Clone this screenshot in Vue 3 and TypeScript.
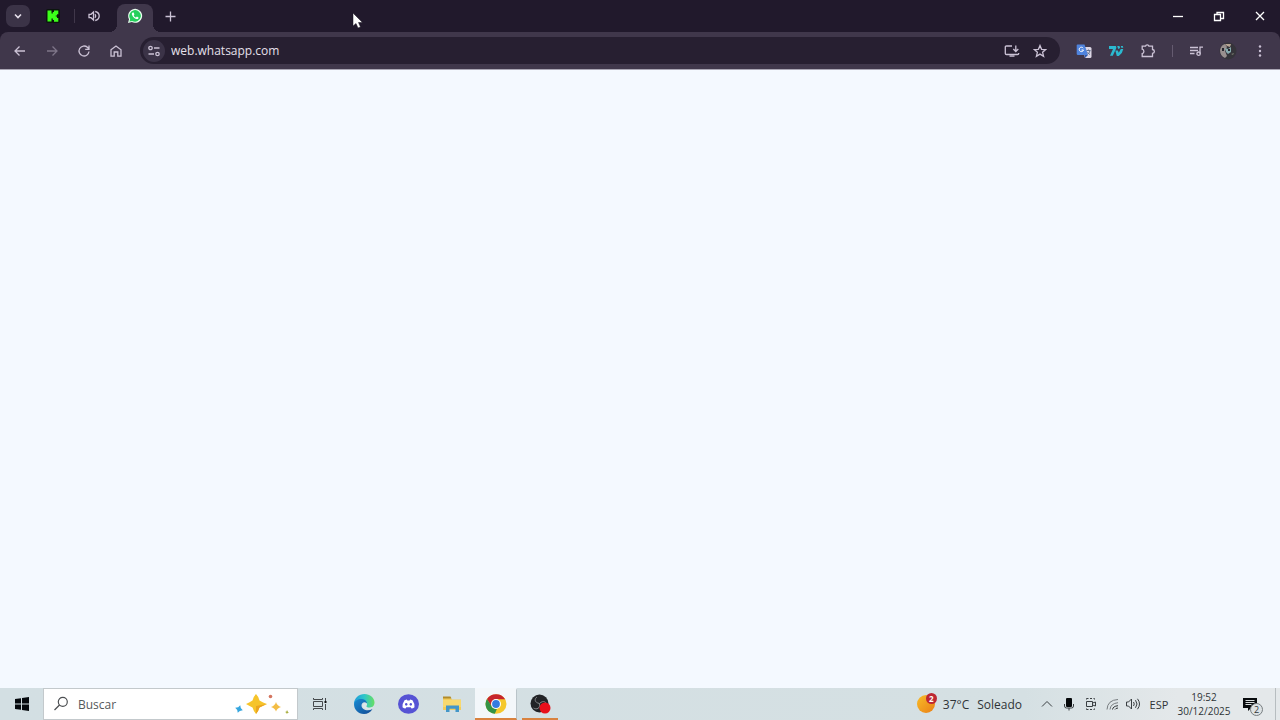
<script setup lang="ts">
import { ref } from 'vue'

const address = ref('web.whatsapp.com')
const query = ref('')
const weather = { temperature: '37°C', summary: 'Soleado', alerts: 2 }
const clock = { time: '19:52', date: '30/12/2025' }
const notifications = 2
</script>

<template>
  <div class="desktop">
    <header class="browser">
      <div class="tabstrip">
        <button class="tab-search" aria-label="Buscar pestañas">
          <svg width="10" height="10" viewBox="0 0 10 10"><path d="M2 3.500 5 6.500 8 3.500" class="line bold" /></svg>
        </button>
        <button class="tab kick" aria-label="Kick">
          <svg width="14" height="14" viewBox="0 0 14 14">
            <rect width="14" height="14" rx="2" fill="#0b160d" />
            <path d="M1.500 1.500h4v3h1.300V3H8V1.500h4.300v3.700H11v1.200H9.800v1.200H11v1.300h1.300v3.800H8V11H6.800V9.500H5.500v3h-4z" fill="#3cff1a" />
          </svg>
        </button>
        <span class="tab-divider"></span>
        <button class="tab audio" aria-label="Pestaña con audio">
          <svg width="12" height="12" viewBox="0 0 12 12">
            <path d="M1 4.300h2L5.500 2v8L3 7.700H1z" class="line" />
            <path d="M7 4.200q1.500 1.800 0 3.600M7.200 1.500q4 1 4 4.500t-4 4.500" class="line" />
          </svg>
        </button>
        <button class="tab active" aria-label="WhatsApp">
          <svg width="16" height="16" viewBox="0 0 16 16">
            <path d="M1 15 2 11.200A7 7 0 1 1 4.800 14z" fill="#e9fff0" />
            <path d="M2.500 13.500 3.200 11A5.800 5.800 0 1 1 5.200 12.900z" fill="#25d05b" />
            <path d="M5.700 4.500c-.9.600-1.100 1.500-.6 2.600.9 2 2.300 3.400 4.300 4 1.300.3 2.200-.5 2.100-1.600L9.900 8.600l-.9 1C7.900 9.200 7.200 8.400 6.700 7.400l.7-.9-.7-1.900z" fill="#fff" />
          </svg>
        </button>
        <button class="new-tab" aria-label="Nueva pestaña">
          <svg width="12" height="12" viewBox="0 0 12 12"><path d="M6.500 1.500v10M1.500 6.500h10" class="line" /></svg>
        </button>
        <div class="window-controls">
          <button aria-label="Minimizar"><svg width="12" height="12" viewBox="0 0 12 12"><path d="M1 6.500h10" class="line white" /></svg></button>
          <button aria-label="Restaurar">
            <svg width="12" height="12" viewBox="0 0 12 12"><path d="M1.500 4.500h6v6h-6zM4 4V2.500h6.500v6H8" class="line white" /></svg>
          </button>
          <button aria-label="Cerrar"><svg width="12" height="12" viewBox="0 0 12 12"><path d="m2 2 8 8M10 2 2 10" class="line white" /></svg></button>
        </div>
      </div>

      <div class="toolbar">
        <nav class="tools">
          <button aria-label="Atrás"><svg width="14" height="14" viewBox="0 0 14 14"><path d="M12 7H2.500M6.500 2.500 2 7l4.500 4.500" class="line" /></svg></button>
          <button class="dim" aria-label="Adelante"><svg width="14" height="14" viewBox="0 0 14 14"><path d="M2 7h9.500M7.500 2.500 12 7l-4.500 4.500" class="line" /></svg></button>
          <button aria-label="Recargar">
            <svg width="14" height="14" viewBox="0 0 14 14"><path d="M12 7.500a5 5 0 1 1-1.600-4.200L12 5M12 1.500V5.300H8.200" class="line" /></svg>
          </button>
          <button aria-label="Inicio"><svg width="14" height="14" viewBox="0 0 14 14"><path d="M2 5.800 7 2l5 3.800V12.200H8.800V8H5.200v4.200H2z" class="line" /></svg></button>
        </nav>
        <form class="omnibox" @submit.prevent>
          <button type="button" class="site-info" aria-label="Información del sitio">
            <svg width="14" height="14" viewBox="0 0 14 14"><circle cx="3.500" cy="4" r="1.700" class="line" /><circle cx="10.500" cy="10" r="1.700" class="line" /><path d="M7 4h5.500M1.500 10H7" class="line" /></svg>
          </button>
          <input v-model="address" class="address" type="text" aria-label="Dirección" spellcheck="false" />
          <button type="button" aria-label="Instalar aplicación">
            <svg width="16" height="14" viewBox="0 0 16 14"><path d="M8 2H2.500Q1.300 2 1.300 3.200v6.300q0 1 1.200 1h11q1.200 0 1.200-1V9M5.500 12.200h5M11.800 1.500v5.700M9.300 5l2.500 2.500L14.300 5" class="line" /></svg>
          </button>
          <button type="button" aria-label="Añadir a marcadores">
            <svg width="14" height="14" viewBox="0 0 14 14"><path d="m7 1.500 1.600 3.800 4.100.3-3.100 2.700 1 4L7 10.100l-3.600 2.200 1-4L1.300 5.600l4.100-.3z" class="line" /></svg>
          </button>
        </form>
        <div class="tools">
          <button aria-label="Traductor">
            <svg width="16" height="16" viewBox="0 0 16 16">
              <path d="M6 4h8q1.500 0 1.500 1.500v8Q15.500 15 14 15H9z" fill="#dcd6e5" />
              <path d="M1.500 1.500h7l3.500 10.500H2Q.7 12 .7 10.700V2.500q0-1 .8-1z" fill="#4f83dd" />
              <path d="M8.500 12H12l-3 3z" fill="#2f56a8" />
              <path d="M7.200 5.200A2.200 2.200 0 1 0 7.500 7H5.500" stroke="#fff" fill="none" />
              <path d="M10.500 7.500h4M12.500 6.500v1M14 7.800q-.5 2-2.500 3.500m0-2q1 1.500 2.500 2.200" stroke="#65748e" fill="none" />
            </svg>
          </button>
          <button aria-label="7TV">
            <svg width="16" height="12" viewBox="0 0 16 12">
              <path d="M1 1h6.800q1 1 .3 2.500L4.800 10.800H2L5 4H1z" fill="#2bb9d0" />
              <path d="M7.300 5.500h2.500l1 2.200 2-3.700h2.500l-1.500 4-3 3H8.800zM9.200 1h2.200l.8 2-2 1zM12.800 1h2l.5 1.800h-2z" fill="#2bb9d0" />
            </svg>
          </button>
          <button aria-label="Extensiones">
            <svg width="16" height="14" viewBox="0 0 16 14"><path d="M2.200 2.200h3.300q.2-1.400 1.700-1.400t1.700 1.400h3.600v3.300q1.900.3 1.900 1.900t-1.900 1.900v3.200H2.200V9.600q1.700-.5 1.700-2.200T2.200 5.200z" class="line" /></svg>
          </button>
          <span class="tool-divider"></span>
          <button aria-label="Controles multimedia">
            <svg width="15" height="12" viewBox="0 0 15 12"><path d="M1 2.500h8M1 5.500h8M1 8.500h4.500M11 8.800V2.200h3" class="line" /><circle cx="9.600" cy="8.700" r="1.700" class="line" /></svg>
          </button>
          <button aria-label="Perfil">
            <svg width="18" height="18" viewBox="0 0 18 18">
              <circle cx="9" cy="9" r="8.500" fill="#35343a" />
              <path d="M1 8q1-5 5-6l2 3-2 4 2 5-2 2Q1 14 1 8z" fill="#99908f" />
              <path d="M6 2h6l-1 3-3-1z" fill="#b7a595" />
              <path d="m6 6 3 1 3-2v5l-3 2-2-2z" fill="#86aaae" />
              <path d="M12 12l3-1-1 2z" fill="#77796e" />
              <path d="M3 6h2v3H3zM9 7h2v2H9z" fill="#27272e" />
            </svg>
          </button>
          <button aria-label="Menú">
            <svg width="4" height="14" viewBox="0 0 4 14" fill="#cbc2d5"><circle cx="2" cy="2.500" r="1.200" /><circle cx="2" cy="7" r="1.200" /><circle cx="2" cy="11.500" r="1.200" /></svg>
          </button>
        </div>
      </div>
    </header>

    <main class="page"></main>

    <footer class="taskbar">
      <button class="start" aria-label="Inicio">
        <svg width="14" height="14" viewBox="0 0 14 14"><path d="M0 2 6 1.200v5.300H0zM7 1l7-1v6.500H7zM0 7.500h6v5.300L0 12zM7 7.500h7V14l-7-1z" fill="#05090d" /></svg>
      </button>
      <label class="search">
        <svg width="16" height="16" viewBox="0 0 16 16" fill="none" stroke="#4c4f52" stroke-width="1.200"><circle cx="9.800" cy="5.800" r="4.500" /><path d="M6.500 9 1.500 14" /></svg>
        <input v-model="query" type="text" placeholder="Buscar" aria-label="Buscar" />
        <svg width="56" height="20" viewBox="0 0 56 20">
          <path d="M22 0Q24.500 2.500 25.500 6.500 29 8.500 33 10 29 11.500 25.500 13.500 24.500 17 22 20 19.500 17 18.500 13.500 15 11.500 12 10 15 8.500 18.500 6.500 19.500 2.500 22 0z" fill="#f6c42b" />
          <path d="M22 20Q24.500 17 25.500 13.500 29 11.500 33 10L22 12z" fill="#eba520" />
          <path d="M5 11q.8 3 4 4-3.200 1-4 4-.8-3-4-4 3.200-1 4-4z" transform="rotate(18 5 15)" fill="#35a6df" />
          <path d="M42 8q1 3.500 5 5-4 1-5 4.500-1-3.500-5-4.500 4-1.500 5-5z" fill="#f3bd45" />
          <circle cx="36.500" cy="2.500" r="1.800" fill="#d47560" />
          <path d="m53 16 1 2 1 .5-1.500.5-.5 1-1-1.500-1-.5 1.500-.5z" fill="#a7ad3e" />
        </svg>
      </label>
      <nav class="apps">
        <button aria-label="Vista de tareas">
          <svg width="16" height="14" viewBox="0 0 16 14" fill="none" stroke="#45494c"><path d="M1.500 1v1.500h9V1M1.500 13v-1.500h9V13M1.500 4.500h9v5h-9zM13.500 1v3M13.500 7v6" /><path d="M12.500 4h2v2h-2z" fill="#111" stroke="none" /></svg>
        </button>
        <button aria-label="Microsoft Edge">
          <svg width="22" height="20" viewBox="0 0 22 20">
            <defs>
              <linearGradient id="edgeTop" x1="0" y1="0" x2="1" y2="0"><stop stop-color="#209bdc" /><stop offset=".5" stop-color="#2fc6c9" /><stop offset="1" stop-color="#68df62" /></linearGradient>
              <linearGradient id="edgeBody" x1="0" y1="0" x2="1" y2="1"><stop stop-color="#188bd3" /><stop offset="1" stop-color="#124a94" /></linearGradient>
            </defs>
            <path d="M1 10C1 4 6 0 11.500 0 17 0 21.500 4 21.500 8.500c0 3.500-2.500 5.300-5.500 5.300-2.500 0-3.500-1-2.500-2.500C15 8.500 10 3.500 1 10z" fill="url(#edgeTop)" />
            <path d="M1 10c1-4 5-5.500 8-5 3 .4 5 2.300 5 4.500-2.700-2.500-5.500-.5-5.500 2 0 4.500 6.500 6 11 3.500C17.500 18.500 14.500 20 11 20 5 20 1 15.500 1 10z" fill="url(#edgeBody)" />
            <path d="M14 9.500c-2.500-1.500-4.500 0-4.500 2 0 3 4.500 4.500 8.500 3.200l1.500-1.700c-3 1.300-7 .8-6-1.300.6-.7.700-1.500.5-2.200z" fill="#dce6e9" />
          </svg>
        </button>
        <button aria-label="Discord">
          <svg width="22" height="20" viewBox="0 0 22 20">
            <ellipse cx="11.500" cy="10" rx="10.500" ry="9.800" fill="#5653d4" />
            <path d="M7.500 6.200 9.800 5.500l.6 1h2.200l.6-1 2.300.7q2.300 3.300 2 7-1.500 1.200-3 1.400l-.8-1.300H9.300l-.8 1.300q-1.500-.2-3-1.400-.3-3.700 2-7z" fill="#fff" />
            <ellipse cx="9.200" cy="10.300" rx="1.200" ry="1.400" fill="#5653d4" /><ellipse cx="13.800" cy="10.300" rx="1.200" ry="1.400" fill="#5653d4" />
          </svg>
        </button>
        <button aria-label="Explorador de archivos">
          <svg width="20" height="18" viewBox="0 0 20 18">
            <path d="M1 2.500h7l2 2h9V15H1z" fill="#f3cd5c" /><path d="M1 1.500h7.500l1 2H1z" fill="#b28b2a" /><path d="M1 5h18v7H1z" fill="#f8d970" />
            <path d="M4 10.500h13V17h-3.500v-3.200h-6V17H4z" fill="#4396c9" />
          </svg>
        </button>
        <button class="running selected" aria-label="Google Chrome">
          <svg width="22" height="20" viewBox="0 0 22 20">
            <ellipse cx="11" cy="10" rx="10.500" ry="9.800" fill="#f5c82c" />
            <path d="M2 5A10.500 9.800 0 0 1 20.200 5.300H11L6.500 12.500z" fill="#c7252c" />
            <path d="M2 5 6.600 12.300Q8 15 12 14.800L9.800 19.800A10.500 9.800 0 0 1 2 5z" fill="#349345" />
            <circle cx="11" cy="10" r="5" fill="#fff" /><circle cx="11" cy="10" r="3.900" fill="#347ce0" />
          </svg>
        </button>
        <button class="running" aria-label="OBS Studio">
          <svg width="22" height="20" viewBox="0 0 22 20">
            <circle cx="10.500" cy="9.500" r="9" fill="#222326" />
            <path d="M10.500 9.500C5 8.500 5.500 4.500 8 3M10.500 9.500c4-4 7.500-1 7.500 2M10.500 9.500c1 5-3 6.500-6 4.500" fill="none" stroke="#858789" />
            <circle cx="16" cy="14" r="5.500" fill="#e8101b" />
          </svg>
        </button>
      </nav>

      <div class="tray">
        <button class="weather">
          <span class="sun">
            <svg width="18" height="18" viewBox="0 0 18 18"><defs><linearGradient id="sunFill" x1="0" y1="0" x2="1" y2="1"><stop stop-color="#f8bd28" /><stop offset="1" stop-color="#ea7f17" /></linearGradient></defs><circle cx="9" cy="9" r="9" fill="url(#sunFill)" /></svg>
            <span class="alert">{{ weather.alerts }}</span>
          </span>
          <span>{{ weather.temperature }}</span>
          <span>{{ weather.summary }}</span>
        </button>
        <button class="status" aria-label="Mostrar iconos ocultos"><svg width="12" height="8" viewBox="0 0 12 8"><path d="M1 6.500 6 1.500l5 5" class="line ink" /></svg></button>
        <button class="status" aria-label="Micrófono"><svg width="12" height="14" viewBox="0 0 12 14"><rect x="3" y="1" width="6" height="9" rx="1" fill="#05080a" /><path d="M1.500 7v2q0 2 2 2h5q2 0 2-2V7M6 11v2.500" class="line ink" /></svg></button>
        <button class="status" aria-label="Cámara"><svg width="12" height="14" viewBox="0 0 12 14"><path d="M1.500 4.500h6v5h-6zM7.500 6l3-1v4l-3-1M1.500 2.500v-1h2M5 1.500h2M8.500 1.500h1v1M1.500 11.500v1h2M5 12.500h2M8.500 12.500h1v-1" class="line ink" /></svg></button>
        <button class="status network" aria-label="Red">
          <svg width="13" height="13" viewBox="0 0 13 13" fill="none" stroke="#777c80"><path d="M1 11.500Q1.500 2 12 1.500M4 11.500Q4.500 5.500 12 4.700" /><path d="M6.500 11.500q.5-3.300 5.500-3.800M9 11.500q.5-1.300 3-1.500" stroke="#33373a" /></svg>
        </button>
        <button class="status volume" aria-label="Volumen"><svg width="16" height="14" viewBox="0 0 16 14"><path d="M1.500 5h2l3-3v10l-3-3h-2zM8.500 5q1.500 2 0 4M10.500 3.200q3 3.800 0 7.600M12.500 1.800q4 5.200 0 10.400" class="line ink" /></svg></button>
        <button class="language">ESP</button>
        <button class="clock"><time>{{ clock.time }}</time><time>{{ clock.date }}</time></button>
        <button class="notices" aria-label="Notificaciones">
          <svg width="14" height="14" viewBox="0 0 14 14"><path d="M0 1h14v10H8l-3 3v-3H0z" fill="#080b0d" /><path d="M2.500 3.500h9M2.500 5.500h9M2.500 7.500h6" stroke="#d8dddd" fill="none" /></svg>
          <span class="count">{{ notifications }}</span>
        </button>
        <button class="show-desktop" aria-label="Mostrar escritorio"></button>
      </div>
    </footer>

    <svg class="pointer" width="12" height="18" viewBox="0 0 12 18"><path d="M1 1v13l3-2.500L6 16l2.500-1-2-4.500h4z" fill="#fff" stroke="#17101f" stroke-width=".5" /></svg>
  </div>
</template>

<style>
body {
  margin: 0;
}
</style>

<style scoped>
.desktop {
  position: relative;
  display: flex;
  flex-direction: column;
  min-height: 100vh;
  background: #f4f9ff;
  font-family: "Open Sans", "Noto Sans", sans-serif;
  color: #2f3437;
}
button {
  display: flex;
  align-items: center;
  justify-content: center;
  padding: 0;
  border: 0;
  background: none;
  color: inherit;
  font: inherit;
}
input {
  min-width: 0;
  padding: 0;
  border: 0;
  outline: 0;
  background: none;
  font: inherit;
}
svg {
  display: block;
  flex: none;
}
.line {
  fill: none;
  stroke: #cbc2d5;
  stroke-width: 1.3;
}
.line.bold {
  stroke: #e6e0ec;
  stroke-width: 1.6;
}
.line.white {
  stroke: #fff;
}
.line.ink {
  stroke: #3a3f42;
  stroke-width: 1;
}
.browser {
  background: #21192c;
}
.tabstrip {
  display: flex;
  align-items: center;
  height: 32px;
  padding-left: 6px;
}
.tab-search {
  width: 24px;
  height: 22px;
  border-radius: 7px;
  background: #3b3347;
}
.tab {
  height: 22px;
}
.kick {
  width: 42px;
  margin-left: 2px;
}
.tab-divider {
  width: 1px;
  height: 14px;
  background: #40374a;
}
.audio {
  width: 38px;
}
.active {
  position: relative;
  align-self: flex-end;
  width: 36px;
  height: 28px;
  margin-left: 4px;
  padding-bottom: 4px;
  border-radius: 8px 8px 0 0;
  background: #40374b;
}
.active::before,
.active::after {
  content: "";
  position: absolute;
  bottom: 0;
  width: 8px;
  height: 8px;
}
.active::before {
  right: 100%;
  background: radial-gradient(circle at 0 0, transparent 8px, #40374b 8px);
}
.active::after {
  left: 100%;
  background: radial-gradient(circle at 100% 0, transparent 8px, #40374b 8px);
}
.new-tab {
  width: 30px;
  height: 24px;
  margin-left: 2px;
}
.window-controls {
  display: flex;
  height: 100%;
  margin-left: auto;
}
.window-controls button {
  width: 41px;
}
.toolbar {
  display: flex;
  align-items: center;
  height: 37px;
  padding: 0 4px;
  border-bottom: 1px solid #aaa6b4;
  border-radius: 8px 8px 0 0;
  background: #40374b;
}
.tools {
  display: flex;
  align-items: center;
}
.tools button {
  width: 32px;
  height: 27px;
}
.tools .dim {
  opacity: 0.45;
}
.omnibox {
  display: flex;
  flex: 1;
  align-items: center;
  height: 27px;
  margin: 0 8px;
  padding: 0 6px 0 3px;
  border-radius: 14px;
  background: #271f31;
}
.omnibox button {
  width: 28px;
  height: 23px;
}
.omnibox .site-info {
  width: 22px;
  height: 22px;
  border-radius: 50%;
  background: #3b3347;
}
.address {
  flex: 1;
  margin-left: 6px;
  color: #e6e0eb;
  font-size: 12px;
}
.tool-divider {
  width: 1px;
  height: 12px;
  margin: 0 7px 0 8px;
  background: #655b70;
}
.page {
  flex: 1;
}
.taskbar {
  display: flex;
  height: 32px;
  background: linear-gradient(90deg, #d3dfe3 0%, #d5e0e3 80%, #e4e8ea 92%, #e4e8ea 100%);
}
.start {
  width: 43px;
}
.search {
  display: flex;
  align-items: center;
  box-sizing: border-box;
  width: 255px;
  padding: 0 7px 0 9px;
  border: 1px solid #c3c9cc;
  background: #fff;
}
.search input {
  flex: 1;
  margin-left: 9px;
  font-size: 12px;
}
.search input::placeholder {
  color: #55595c;
  opacity: 1;
}
.apps {
  display: flex;
}
.apps button {
  box-sizing: border-box;
  width: 44px;
  border-bottom: 2px solid transparent;
  border-top: 2px solid transparent;
}
.apps .running {
  width: 36px;
  margin: 0 4px;
  border-bottom-color: #d9823f;
}
.apps .selected {
  width: 42px;
  margin: 0 1px;
  border-top-color: #f3f7fa;
  border-right: 1px solid #b9c4c9;
  background: #f3f7fa;
}
.tray {
  display: flex;
  margin-left: auto;
}
.weather {
  gap: 8px;
  margin-right: 14px;
  font-size: 12px;
}
.sun {
  position: relative;
}
.alert {
  position: absolute;
  top: -2px;
  right: -2px;
  width: 11px;
  height: 11px;
  border-radius: 50%;
  background: #bd2733;
  color: #fff;
  font-size: 8px;
  font-weight: 700;
  line-height: 11px;
}
.status {
  width: 22px;
}
.network {
  width: 21px;
}
.volume {
  width: 20px;
}
.language {
  width: 32px;
  font-size: 11px;
}
.clock {
  flex-direction: column;
  width: 58px;
  font-size: 10px;
  line-height: 14px;
}
.notices {
  position: relative;
  justify-content: flex-start;
  width: 42px;
  padding-left: 10px;
}
.count {
  position: absolute;
  top: 15px;
  left: 17px;
  box-sizing: border-box;
  width: 13px;
  height: 13px;
  border: 1px solid #787e81;
  border-radius: 50%;
  background: #dde2e4;
  font-size: 9px;
  line-height: 11px;
}
.show-desktop {
  width: 5px;
  border-left: 1px solid #b7bdc0;
}
.pointer {
  position: absolute;
  top: 12px;
  left: 352px;
  pointer-events: none;
}
</style>
